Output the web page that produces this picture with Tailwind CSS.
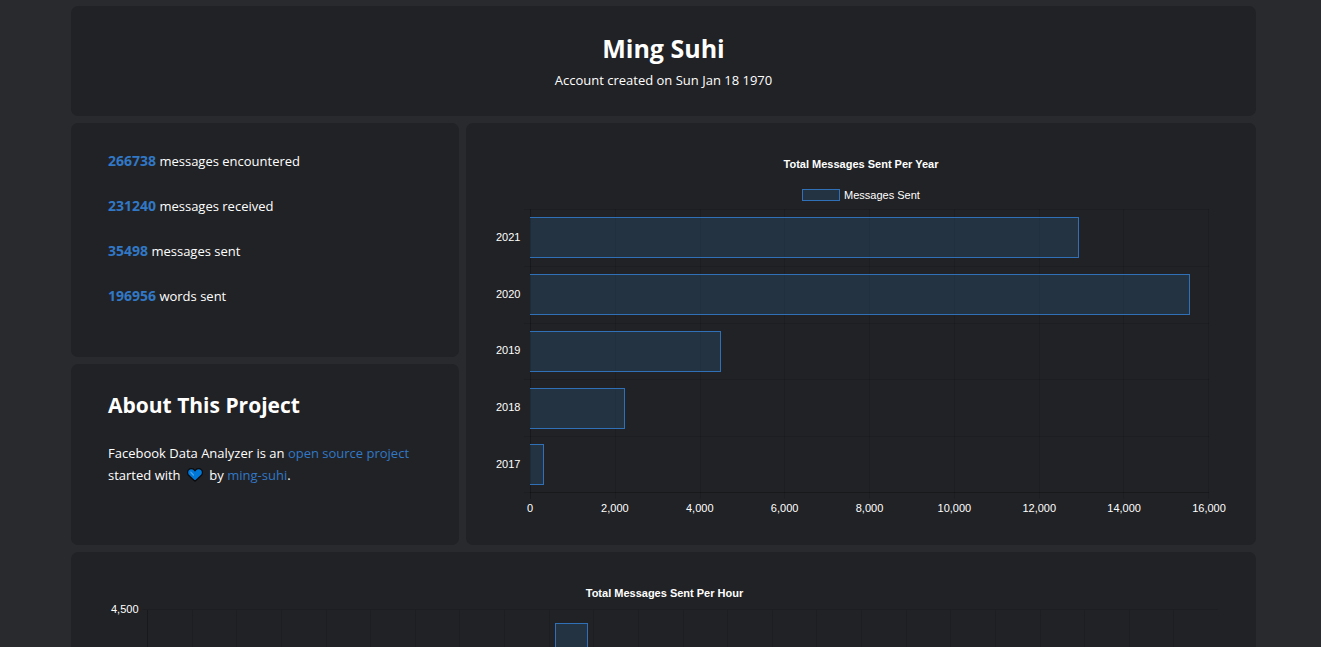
<!DOCTYPE html>
<html lang="en">
<head>
<meta charset="utf-8">
<meta name="viewport" content="width=device-width, initial-scale=1">
<title>Facebook Data Analyzer</title>
<script src="https://cdn.jsdelivr.net/npm/@tailwindcss/browser@4"></script>
</head>
<body class="bg-[#292a2d] text-white font-['Open_Sans','Noto_Sans',sans-serif] text-[13px] leading-[22px]">
<main class="h-screen overflow-hidden flex flex-col gap-[7px] pt-[6px] pl-[71px] pr-[65px]">

  <header class="shrink-0 rounded-[7px] bg-[#212225] text-center pt-[25px] pb-[23px]">
    <h1 class="text-[25px] leading-[34px] font-bold">Ming Suhi</h1>
    <p class="pt-[3px] leading-[25px]">Account created on Sun Jan 18 1970</p>
  </header>

  <div class="shrink-0 grid grid-cols-[388fr_790fr] gap-[7px]">
    <div class="flex flex-col gap-[7px]">
      <section class="rounded-[7px] bg-[#212225] px-[37px] pt-[27px] pb-[50px] flex flex-col gap-[23px]">
        <p><strong class="text-[14px] text-[#3178c6]">266738</strong> messages encountered</p>
        <p><strong class="text-[14px] text-[#3178c6]">231240</strong> messages received</p>
        <p><strong class="text-[14px] text-[#3178c6]">35498</strong> messages sent</p>
        <p><strong class="text-[14px] text-[#3178c6]">196956</strong> words sent</p>
      </section>
      <section class="grow rounded-[7px] bg-[#212225] pl-[37px] pr-[30px] pt-[26px]">
        <h2 class="text-[21px] leading-[30px] font-bold">About This Project</h2>
        <p class="mt-[22px]">Facebook Data Analyzer is an <a href="#" class="text-[#3178c6]">open source project</a><br>started with
          <svg class="inline-block w-[16px] h-[14px] mx-[3px] align-[-2px]" viewBox="0 0 16 14" role="img" aria-label="love"><path d="M8 13.200 1.600 7.300C.3 6 .2 3.200 1.500 1.800 3 .3 5.800.3 7.200 1.900L8 2.800l.8-.9C10.200.3 13 .3 14.500 1.800c1.300 1.400 1.200 4.200-.1 5.500Z" fill="#0078d7" stroke="#0b0b0d" stroke-width="1.200" stroke-linejoin="round"/><path d="M3.800 4.200 6.400 7" stroke="#4aa3ea" stroke-width="1.200" stroke-linecap="round"/></svg>
          by <a href="#" class="text-[#3178c6]">ming-suhi</a>.</p>
      </section>
    </div>

    <section class="rounded-[7px] bg-[#212225] px-[30px] pt-[34px] pb-[30px] font-['Liberation_Sans',Arial,sans-serif] text-[11px] leading-[14px]">
      <h3 class="text-center font-bold">Total Messages Sent Per Year</h3>
      <div class="mt-[18px] flex items-center justify-center gap-[4px] leading-[12px]">
        <span class="w-[38px] h-[12px] border border-[#2f70b7] bg-[#3178b4]/20"></span>Messages Sent
      </div>
      <div class="mt-[8px] mr-[17px] grid grid-cols-[24px_10px_1fr]">
        <!-- year labels -->
        <div class="grid grid-rows-5 h-[283px] items-center">
          <span>2021</span><span>2020</span><span>2019</span><span>2018</span><span>2017</span>
        </div>
        <!-- tick marks -->
        <div class="grid grid-rows-5 h-[284px] pl-[4px]">
          <i class="border-t border-black/10"></i><i class="border-t border-black/10"></i><i class="border-t border-black/10"></i><i class="border-t border-black/10"></i><i class="border-y border-black/10"></i>
        </div>
        <div class="relative">
          <div class="grid grid-cols-8 h-[290px] border-r border-black/10">
            <i class="border-l border-black/25"></i><i class="border-l border-black/10"></i><i class="border-l border-black/10"></i><i class="border-l border-black/10"></i><i class="border-l border-black/10"></i><i class="border-l border-black/10"></i><i class="border-l border-black/10"></i><i class="border-l border-black/10"></i>
          </div>
          <div class="absolute inset-x-0 top-0 h-[284px] grid grid-rows-5">
            <div class="flex items-center border-t border-black/10"><div class="h-[41px] border border-l-0 border-[#2f70b7] bg-[#3178b4]/20" style="width:80.9%"></div></div>
            <div class="flex items-center border-t border-black/10"><div class="h-[41px] border border-l-0 border-[#2f70b7] bg-[#3178b4]/20" style="width:97.2%"></div></div>
            <div class="flex items-center border-t border-black/10"><div class="h-[41px] border border-l-0 border-[#2f70b7] bg-[#3178b4]/20" style="width:28.15%"></div></div>
            <div class="flex items-center border-t border-black/10"><div class="h-[41px] border border-l-0 border-[#2f70b7] bg-[#3178b4]/20" style="width:14%"></div></div>
            <div class="flex items-center border-t border-b border-t-black/10 border-b-black/25"><div class="h-[41px] border border-l-0 border-[#2f70b7] bg-[#3178b4]/20" style="width:2.06%"></div></div>
          </div>
        </div>
        <!-- value labels, each centred on its grid line -->
        <div class="col-start-3 mt-[2px] flex justify-between">
          <span class="w-0 flex justify-center">0</span><span class="w-0 flex justify-center">2,000</span><span class="w-0 flex justify-center">4,000</span><span class="w-0 flex justify-center">6,000</span><span class="w-0 flex justify-center">8,000</span><span class="w-0 flex justify-center">10,000</span><span class="w-0 flex justify-center">12,000</span><span class="w-0 flex justify-center">14,000</span><span class="w-0 flex justify-center">16,000</span>
        </div>
      </div>
    </section>
  </div>

  <section class="grow min-h-0 rounded-t-[7px] bg-[#212225] pl-[40px] pr-[38px] pt-[34px] flex flex-col font-['Liberation_Sans',Arial,sans-serif] text-[11px] leading-[14px]">
    <h3 class="text-center font-bold">Total Messages Sent Per Hour</h3>
    <div class="grow mt-[2px] flex">
      <span class="w-[31px]">4,500</span>
      <i class="w-[5px] mt-[7px] border-t border-black/10"></i>
      <div class="grow mt-[7px] border-t border-black/10 grid grid-cols-24">
        <i class="border-l border-black/25"></i><i class="border-l border-black/10"></i><i class="border-l border-black/10"></i><i class="border-l border-black/10"></i><i class="border-l border-black/10"></i><i class="border-l border-black/10"></i><i class="border-l border-black/10"></i><i class="border-l border-black/10"></i><i class="border-l border-black/10"></i>
        <div class="border-l border-black/10 flex justify-center pt-[13px]"><div class="w-3/4 border border-b-0 border-[#2f70b7] bg-[#3178b4]/20"></div></div>
        <i class="border-l border-black/10"></i><i class="border-l border-black/10"></i><i class="border-l border-black/10"></i><i class="border-l border-black/10"></i><i class="border-l border-black/10"></i><i class="border-l border-black/10"></i><i class="border-l border-black/10"></i><i class="border-l border-black/10"></i><i class="border-l border-black/10"></i><i class="border-l border-black/10"></i><i class="border-l border-black/10"></i><i class="border-l border-black/10"></i><i class="border-l border-black/10"></i><i class="border-l border-black/10"></i>
      </div>
    </div>
  </section>
</main>
</body>
</html>
